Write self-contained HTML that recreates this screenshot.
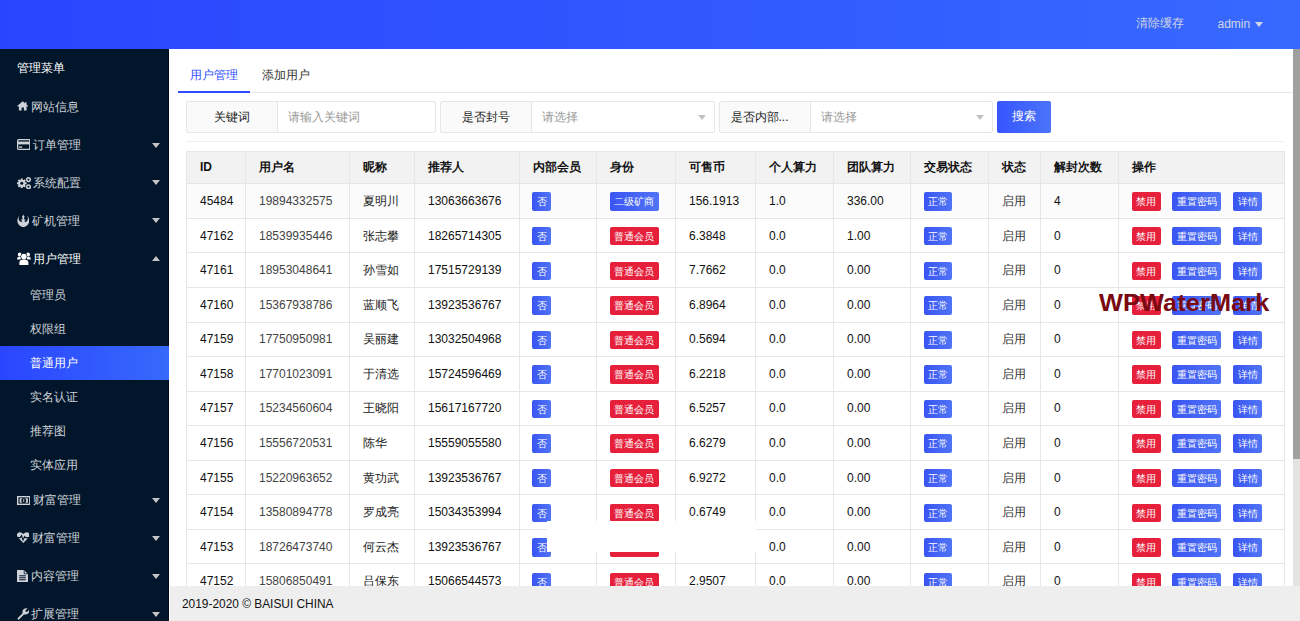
<!DOCTYPE html><html><head><meta charset="utf-8"><style>
*{margin:0;padding:0;box-sizing:border-box}
html,body{width:1300px;height:621px;overflow:hidden;background:#fff;font-family:"Liberation Sans",sans-serif;}
.a{position:absolute}
.t{position:absolute;white-space:nowrap}
#hdr{left:0;top:0;width:1300px;height:49px;background:linear-gradient(90deg,#2a45ff,#3769ff)}
#side{left:0;top:49px;width:169px;height:572px;background:#01162a;overflow:hidden}
#side .it{position:absolute;left:0;width:169px;color:#cfd2d8;font-size:12px;white-space:nowrap}
.arr{position:absolute;left:151.7px;width:0;height:0;border-left:4.8px solid transparent;border-right:4.8px solid transparent;border-top:5.2px solid #c2c4c8}
.arru{position:absolute;left:151.7px;width:0;height:0;border-left:4.8px solid transparent;border-right:4.8px solid transparent;border-bottom:5.2px solid #c2c4c8}
.hl{position:absolute;height:1px;background:#e6e6e6}
.vl{position:absolute;width:1px;background:#e6e6e6}
.cell{position:absolute;white-space:nowrap;font-size:12px;color:#222}
.bd{position:absolute;height:18.4px;line-height:19px;font-size:10px;font-weight:500;color:#fff;text-align:center;border-radius:2px;white-space:nowrap}
.bl{background:linear-gradient(90deg,#3a55f2,#5074f6)}
.rd{background:#e61f3b}
</style></head><body>
<div id="hdr" class="a"></div>
<div class="t" style="left:1136px;top:15px;font-size:12px;line-height:17px;color:#d2d6e6">清除缓存</div>
<div class="t" style="left:1217.5px;top:15.7px;font-size:12px;line-height:17px;color:#d2d6e6">admin</div>
<div class="a" style="left:1255px;top:22px;width:0;height:0;border-left:4.5px solid transparent;border-right:4.5px solid transparent;border-top:5px solid #d2d6e6"></div>
<div id="side" class="a">
<div class="it" style="left:17px;top:10px;line-height:18px;color:#fff">管理菜单</div>
<div class="a" style="left:16.8px;top:52.20px;line-height:0"><svg width="11.5" height="9.5" viewBox="0 0 11.5 9.5"><path d="M5.75 0.3 L0.2 4.9 L0.9 5.7 L1.9 4.9 V9.5 H4.6 V6.6 H6.9 V9.5 H9.6 V4.9 L10.6 5.7 L11.3 4.9 L9.5 3.4 V0.9 H8.3 V2.4 Z" fill="#cfd2d8"/></svg></div>
<div class="it" style="left:31px;width:120px;top:48.70px;height:18px;line-height:18px;color:#cfd2d8">网站信息</div>
<div class="a" style="left:16.8px;top:90.20px;line-height:0"><svg width="13.5" height="11" viewBox="0 0 13.5 11"><rect x="0.65" y="0.65" width="12.2" height="9.7" rx="1" fill="none" stroke="#cfd2d8" stroke-width="1.3"/><rect x="0.65" y="2.6" width="12.2" height="2.8" fill="#cfd2d8"/><rect x="2" y="7.4" width="3.2" height="1.3" fill="#cfd2d8"/></svg></div>
<div class="it" style="left:33px;width:120px;top:86.70px;height:18px;line-height:18px;color:#cfd2d8">订单管理</div>
<div class="arr" style="top:93.50px"></div>
<div class="a" style="left:16.8px;top:127.60px;line-height:0"><svg width="14" height="12.5" viewBox="0 0 14 12.5"><g fill="#cfd2d8"><circle cx="4.8" cy="6.3" r="3.6"/><g transform="translate(4.8 6.3)"><rect x="-1" y="-4.8" width="2" height="9.6"/><rect x="-1" y="-4.8" width="2" height="9.6" transform="rotate(45)"/><rect x="-1" y="-4.8" width="2" height="9.6" transform="rotate(90)"/><rect x="-1" y="-4.8" width="2" height="9.6" transform="rotate(135)"/></g></g><circle cx="4.8" cy="6.3" r="1.5" fill="#01162a"/><circle cx="11.5" cy="2.6" r="1.8" fill="none" stroke="#cfd2d8" stroke-width="1.5"/><circle cx="11.5" cy="9.8" r="1.8" fill="none" stroke="#cfd2d8" stroke-width="1.5"/></svg></div>
<div class="it" style="left:33px;width:120px;top:124.60px;height:18px;line-height:18px;color:#cfd2d8">系统配置</div>
<div class="arr" style="top:131.40px"></div>
<div class="a" style="left:16.8px;top:165.00px;line-height:0"><svg width="12.6" height="13.4" viewBox="0 0 12.6 13.4"><path d="M2.4 1.6 Q-1.6 6.5 2 11 Q6.3 15.2 10.6 11 Q14.2 6.5 10.2 1.6 Q12 5.5 9.5 7.5 Q8.4 8.3 7.3 7.6 Q8.6 6.6 8.2 5 L7.2 5.9 L7.1 3.6 Q7.8 2.8 7.5 2.1 Q7 2.6 6.3 0.3 Q5.6 2.6 5.1 2.1 Q4.8 2.8 5.5 3.6 L5.4 5.9 L4.4 5 Q4 6.6 5.3 7.6 Q4.2 8.3 3.1 7.5 Q0.6 5.5 2.4 1.6Z" fill="#cfd2d8"/></svg></div>
<div class="it" style="left:32px;width:120px;top:162.60px;height:18px;line-height:18px;color:#cfd2d8">矿机管理</div>
<div class="arr" style="top:169.40px"></div>
<div class="a" style="left:16.8px;top:203.00px;line-height:0"><svg width="13.8" height="13" viewBox="0 0 13.8 13"><g fill="#fff"><circle cx="2.7" cy="2.4" r="1.9"/><circle cx="11.1" cy="2.4" r="1.9"/><path d="M0 7.6 Q0 4.4 2.7 4.4 Q4 4.4 4.6 5.2 L3.4 7.6Z"/><path d="M13.8 7.6 Q13.8 4.4 11.1 4.4 Q9.8 4.4 9.2 5.2 L10.4 7.6Z"/></g><circle cx="6.9" cy="4.6" r="3.4" fill="#01162a"/><path d="M2.4 13 V10.4 Q2.4 7.4 6.9 7.4 Q11.4 7.4 11.4 10.4 V13Z" fill="#fff"/><circle cx="6.9" cy="4.6" r="2.8" fill="#fff"/></svg></div>
<div class="it" style="left:33px;width:120px;top:200.60px;height:18px;line-height:18px;color:#fff">用户管理</div>
<div class="arru" style="top:207.40px"></div>
<div class="a" style="left:168px;top:0;width:1px;height:572px;background:#000a1c"></div>
<div class="a" style="left:0;top:296.80px;width:169px;height:34.2px;background:linear-gradient(90deg,#2a45ff,#3769fb)"></div>
<div class="it" style="left:30px;width:120px;top:236.60px;line-height:18px;color:#cfd2d8">管理员</div>
<div class="it" style="left:30px;width:120px;top:271.00px;line-height:18px;color:#cfd2d8">权限组</div>
<div class="it" style="left:30px;width:120px;top:304.60px;line-height:18px;color:#fff">普通用户</div>
<div class="it" style="left:30px;width:120px;top:338.80px;line-height:18px;color:#cfd2d8">实名认证</div>
<div class="it" style="left:30px;width:120px;top:372.80px;line-height:18px;color:#cfd2d8">推荐图</div>
<div class="it" style="left:30px;width:120px;top:406.80px;line-height:18px;color:#cfd2d8">实体应用</div>
<div class="a" style="left:16.8px;top:446.80px;line-height:0"><svg width="13.5" height="9" viewBox="0 0 13.5 9"><rect x="0" y="0" width="13.5" height="9" fill="#cfd2d8"/><rect x="1.4" y="1.4" width="10.7" height="6.2" fill="#01162a"/><rect x="2.6" y="2.3" width="8.3" height="4.4" fill="#cfd2d8"/><ellipse cx="6.75" cy="4.5" rx="2.4" ry="2.6" fill="#01162a"/><rect x="6.3" y="3" width="0.9" height="3" fill="#cfd2d8"/></svg></div>
<div class="it" style="left:33px;width:120px;top:442.40px;height:18px;line-height:18px;color:#cfd2d8">财富管理</div>
<div class="arr" style="top:449.20px"></div>
<div class="a" style="left:16.8px;top:483.40px;line-height:0"><svg width="12.6" height="11" viewBox="0 0 12.6 11"><path d="M6.3 11 L1 5.6 Q-1 3 0.8 1 Q3.3 -1 6.3 2 Q9.3 -1 11.8 1 Q13.6 3 11.6 5.6 Z" fill="#cfd2d8"/><path d="M0.2 5.6 H3.3 L4.5 3.6 L6 8 L7.6 4.6 L8.4 5.6 H12.4" fill="none" stroke="#01162a" stroke-width="1.1"/></svg></div>
<div class="it" style="left:32px;width:120px;top:480.00px;height:18px;line-height:18px;color:#cfd2d8">财富管理</div>
<div class="arr" style="top:486.80px"></div>
<div class="a" style="left:16.8px;top:520.70px;line-height:0"><svg width="11" height="12.2" viewBox="0 0 11 12.2"><path d="M0 0 H7 L11 4 V12.2 H0Z" fill="#cfd2d8"/><path d="M7.2 0 V3.8 H11" fill="none" stroke="#01162a" stroke-width="0.8"/><rect x="2.2" y="5.3" width="6.6" height="1" fill="#01162a"/><rect x="2.2" y="7.3" width="6.6" height="1" fill="#01162a"/><rect x="2.2" y="9.3" width="6.6" height="1" fill="#01162a"/></svg></div>
<div class="it" style="left:31px;width:120px;top:518.20px;height:18px;line-height:18px;color:#cfd2d8">内容管理</div>
<div class="arr" style="top:525.00px"></div>
<div class="a" style="left:16.8px;top:559.30px;line-height:0"><svg width="12.2" height="12" viewBox="0 0 12.2 12"><path d="M1.3 11.8 Q0.2 11 0.8 10 L5.6 5.2 Q5 2.6 6.8 1 Q8.5 -0.3 10.6 0.4 L8.3 2.5 L8.8 3.7 L10 4.1 L12 1.9 Q12.6 4.1 11.1 5.6 Q9.4 7.1 7 6.4 L2.2 11.2 Q1.8 12 1.3 11.8Z" fill="#cfd2d8"/></svg></div>
<div class="it" style="left:31px;width:120px;top:556.00px;height:18px;line-height:18px;color:#cfd2d8">扩展管理</div>
<div class="arr" style="top:562.80px"></div>
</div>
<div class="t" style="left:190px;top:66px;font-size:12px;line-height:18px;color:#3050ff">用户管理</div>
<div class="t" style="left:262px;top:66px;font-size:12px;line-height:18px;color:#333">添加用户</div>
<div class="hl" style="left:178px;top:92px;width:1115px;background:#e6e6e6"></div>
<div class="a" style="left:178px;top:91px;width:72px;height:2px;background:#2e4cff"></div>
<div class="a" style="left:186px;top:101px;width:92px;height:32px;background:#fafafa;border:1px solid #e6e6e6;border-radius:2px 0 0 2px"></div>
<div class="a" style="left:277px;top:101px;width:159px;height:32px;background:#fff;border:1px solid #e6e6e6;border-radius:0 2px 2px 0"></div>
<div class="t" style="left:186px;width:92px;text-align:center;top:108px;font-size:12px;line-height:18px;color:#222">关键词</div>
<div class="t" style="left:288px;top:108px;font-size:12px;line-height:18px;color:#999">请输入关键词</div>
<div class="a" style="left:440px;top:101px;width:92px;height:32px;background:#fafafa;border:1px solid #e6e6e6;border-radius:2px 0 0 2px"></div>
<div class="a" style="left:531px;top:101px;width:183.5px;height:32px;background:#fff;border:1px solid #e6e6e6;border-radius:0 2px 2px 0"></div>
<div class="t" style="left:440px;width:92px;text-align:center;top:108px;font-size:12px;line-height:18px;color:#222">是否封号</div>
<div class="t" style="left:542px;top:108px;font-size:12px;line-height:18px;color:#999">请选择</div>
<div class="a" style="left:697.5px;top:114.5px;width:0;height:0;border-left:4.5px solid transparent;border-right:4.5px solid transparent;border-top:5px solid #c2c2c2"></div>
<div class="a" style="left:718.5px;top:101px;width:92px;height:32px;background:#fafafa;border:1px solid #e6e6e6;border-radius:2px 0 0 2px"></div>
<div class="a" style="left:809.5px;top:101px;width:183.0px;height:32px;background:#fff;border:1px solid #e6e6e6;border-radius:0 2px 2px 0"></div>
<div class="t" style="left:730.5px;top:108px;font-size:12px;line-height:18px;color:#222">是否内部...</div>
<div class="t" style="left:820.5px;top:108px;font-size:12px;line-height:18px;color:#999">请选择</div>
<div class="a" style="left:975.5px;top:114.5px;width:0;height:0;border-left:4.5px solid transparent;border-right:4.5px solid transparent;border-top:5px solid #c2c2c2"></div>
<div class="a" style="left:996.5px;top:101px;width:54px;height:32px;border-radius:2px;background:linear-gradient(90deg,#3755ff,#4b74f9)"></div>
<div class="t" style="left:996.5px;width:54px;text-align:center;top:107.3px;font-size:12px;line-height:18px;color:#fff">搜索</div>
<div class="hl" style="left:186px;top:141px;width:1098px;background:#eeeeee"></div>
<div class="a" style="left:186px;top:151px;width:1099px;height:32px;background:#f2f2f2"></div>
<div class="a" style="left:186px;top:183px;width:1099px;height:34.545px;background:#fbfbfb"></div>
<div class="hl" style="left:186px;top:151px;width:1099px"></div>
<div class="hl" style="left:186px;top:183.400px;width:1099px"></div>
<div class="hl" style="left:186px;top:217.945px;width:1099px"></div>
<div class="hl" style="left:186px;top:252.490px;width:1099px"></div>
<div class="hl" style="left:186px;top:287.035px;width:1099px"></div>
<div class="hl" style="left:186px;top:321.580px;width:1099px"></div>
<div class="hl" style="left:186px;top:356.125px;width:1099px"></div>
<div class="hl" style="left:186px;top:390.670px;width:1099px"></div>
<div class="hl" style="left:186px;top:425.215px;width:1099px"></div>
<div class="hl" style="left:186px;top:459.760px;width:1099px"></div>
<div class="hl" style="left:186px;top:494.305px;width:1099px"></div>
<div class="hl" style="left:186px;top:528.850px;width:1099px"></div>
<div class="hl" style="left:186px;top:563.395px;width:1099px"></div>
<div class="hl" style="left:186px;top:597.940px;width:1099px"></div>
<div class="vl" style="left:186px;top:151px;height:435px"></div>
<div class="vl" style="left:245px;top:151px;height:435px"></div>
<div class="vl" style="left:349px;top:151px;height:435px"></div>
<div class="vl" style="left:414px;top:151px;height:435px"></div>
<div class="vl" style="left:519px;top:151px;height:435px"></div>
<div class="vl" style="left:596px;top:151px;height:435px"></div>
<div class="vl" style="left:675px;top:151px;height:435px"></div>
<div class="vl" style="left:755px;top:151px;height:435px"></div>
<div class="vl" style="left:833px;top:151px;height:435px"></div>
<div class="vl" style="left:910px;top:151px;height:435px"></div>
<div class="vl" style="left:988px;top:151px;height:435px"></div>
<div class="vl" style="left:1040px;top:151px;height:435px"></div>
<div class="vl" style="left:1118px;top:151px;height:435px"></div>
<div class="vl" style="left:1284px;top:151px;height:435px"></div>
<div class="cell" style="left:200px;top:151px;height:32px;line-height:32px;font-weight:bold;font-size:12px;color:#111">ID</div>
<div class="cell" style="left:259px;top:151px;height:32px;line-height:32px;font-weight:bold;font-size:12px;color:#111">用户名</div>
<div class="cell" style="left:363px;top:151px;height:32px;line-height:32px;font-weight:bold;font-size:12px;color:#111">昵称</div>
<div class="cell" style="left:428px;top:151px;height:32px;line-height:32px;font-weight:bold;font-size:12px;color:#111">推荐人</div>
<div class="cell" style="left:533px;top:151px;height:32px;line-height:32px;font-weight:bold;font-size:12px;color:#111">内部会员</div>
<div class="cell" style="left:610px;top:151px;height:32px;line-height:32px;font-weight:bold;font-size:12px;color:#111">身份</div>
<div class="cell" style="left:689px;top:151px;height:32px;line-height:32px;font-weight:bold;font-size:12px;color:#111">可售币</div>
<div class="cell" style="left:769px;top:151px;height:32px;line-height:32px;font-weight:bold;font-size:12px;color:#111">个人算力</div>
<div class="cell" style="left:847px;top:151px;height:32px;line-height:32px;font-weight:bold;font-size:12px;color:#111">团队算力</div>
<div class="cell" style="left:924px;top:151px;height:32px;line-height:32px;font-weight:bold;font-size:12px;color:#111">交易状态</div>
<div class="cell" style="left:1002px;top:151px;height:32px;line-height:32px;font-weight:bold;font-size:12px;color:#111">状态</div>
<div class="cell" style="left:1054px;top:151px;height:32px;line-height:32px;font-weight:bold;font-size:12px;color:#111">解封次数</div>
<div class="cell" style="left:1132px;top:151px;height:32px;line-height:32px;font-weight:bold;font-size:12px;color:#111">操作</div>
<div class="cell" style="left:200px;top:184.00px;height:34.545px;line-height:34.545px;color:#111;font-size:12px;">45484</div>
<div class="cell" style="left:259px;top:184.00px;height:34.545px;line-height:34.545px;color:#444;font-size:12px;">19894332575</div>
<div class="cell" style="left:363px;top:184.00px;height:34.545px;line-height:34.545px;color:#222;font-size:12px;">夏明川</div>
<div class="cell" style="left:428px;top:184.00px;height:34.545px;line-height:34.545px;color:#111;font-size:12px;">13063663676</div>
<div class="bd bl" style="left:532px;top:192.37px;width:19px">否</div>
<div class="bd bl" style="left:609.5px;top:192.37px;width:49px">二级矿商</div>
<div class="cell" style="left:689px;top:184.00px;height:34.545px;line-height:34.545px;color:#111;font-size:12px;">156.1913</div>
<div class="cell" style="left:769px;top:184.00px;height:34.545px;line-height:34.545px;color:#111;font-size:12px;">1.0</div>
<div class="cell" style="left:847px;top:184.00px;height:34.545px;line-height:34.545px;color:#111;font-size:12px;">336.00</div>
<div class="bd bl" style="left:923.5px;top:192.37px;width:28.5px">正常</div>
<div class="cell" style="left:1002px;top:184.00px;height:34.545px;line-height:34.545px;color:#333;font-size:12px;">启用</div>
<div class="cell" style="left:1054px;top:184.00px;height:34.545px;line-height:34.545px;color:#111;font-size:12px;">4</div>
<div class="bd rd" style="left:1132px;top:192.37px;width:28.5px">禁用</div>
<div class="bd bl" style="left:1172px;top:192.37px;width:49px">重置密码</div>
<div class="bd bl" style="left:1233px;top:192.37px;width:29px">详情</div>
<div class="cell" style="left:200px;top:218.58px;height:34.545px;line-height:34.545px;color:#111;font-size:12px;">47162</div>
<div class="cell" style="left:259px;top:218.58px;height:34.545px;line-height:34.545px;color:#444;font-size:12px;">18539935446</div>
<div class="cell" style="left:363px;top:218.58px;height:34.545px;line-height:34.545px;color:#222;font-size:12px;">张志攀</div>
<div class="cell" style="left:428px;top:218.58px;height:34.545px;line-height:34.545px;color:#111;font-size:12px;">18265714305</div>
<div class="bd bl" style="left:532px;top:226.95px;width:19px">否</div>
<div class="bd rd" style="left:609.5px;top:226.95px;width:49px">普通会员</div>
<div class="cell" style="left:689px;top:218.58px;height:34.545px;line-height:34.545px;color:#111;font-size:12px;">6.3848</div>
<div class="cell" style="left:769px;top:218.58px;height:34.545px;line-height:34.545px;color:#111;font-size:12px;">0.0</div>
<div class="cell" style="left:847px;top:218.58px;height:34.545px;line-height:34.545px;color:#111;font-size:12px;">1.00</div>
<div class="bd bl" style="left:923.5px;top:226.95px;width:28.5px">正常</div>
<div class="cell" style="left:1002px;top:218.58px;height:34.545px;line-height:34.545px;color:#333;font-size:12px;">启用</div>
<div class="cell" style="left:1054px;top:218.58px;height:34.545px;line-height:34.545px;color:#111;font-size:12px;">0</div>
<div class="bd rd" style="left:1132px;top:226.95px;width:28.5px">禁用</div>
<div class="bd bl" style="left:1172px;top:226.95px;width:49px">重置密码</div>
<div class="bd bl" style="left:1233px;top:226.95px;width:29px">详情</div>
<div class="cell" style="left:200px;top:253.16px;height:34.545px;line-height:34.545px;color:#111;font-size:12px;">47161</div>
<div class="cell" style="left:259px;top:253.16px;height:34.545px;line-height:34.545px;color:#444;font-size:12px;">18953048641</div>
<div class="cell" style="left:363px;top:253.16px;height:34.545px;line-height:34.545px;color:#222;font-size:12px;">孙雪如</div>
<div class="cell" style="left:428px;top:253.16px;height:34.545px;line-height:34.545px;color:#111;font-size:12px;">17515729139</div>
<div class="bd bl" style="left:532px;top:261.53px;width:19px">否</div>
<div class="bd rd" style="left:609.5px;top:261.53px;width:49px">普通会员</div>
<div class="cell" style="left:689px;top:253.16px;height:34.545px;line-height:34.545px;color:#111;font-size:12px;">7.7662</div>
<div class="cell" style="left:769px;top:253.16px;height:34.545px;line-height:34.545px;color:#111;font-size:12px;">0.0</div>
<div class="cell" style="left:847px;top:253.16px;height:34.545px;line-height:34.545px;color:#111;font-size:12px;">0.00</div>
<div class="bd bl" style="left:923.5px;top:261.53px;width:28.5px">正常</div>
<div class="cell" style="left:1002px;top:253.16px;height:34.545px;line-height:34.545px;color:#333;font-size:12px;">启用</div>
<div class="cell" style="left:1054px;top:253.16px;height:34.545px;line-height:34.545px;color:#111;font-size:12px;">0</div>
<div class="bd rd" style="left:1132px;top:261.53px;width:28.5px">禁用</div>
<div class="bd bl" style="left:1172px;top:261.53px;width:49px">重置密码</div>
<div class="bd bl" style="left:1233px;top:261.53px;width:29px">详情</div>
<div class="cell" style="left:200px;top:287.74px;height:34.545px;line-height:34.545px;color:#111;font-size:12px;">47160</div>
<div class="cell" style="left:259px;top:287.74px;height:34.545px;line-height:34.545px;color:#444;font-size:12px;">15367938786</div>
<div class="cell" style="left:363px;top:287.74px;height:34.545px;line-height:34.545px;color:#222;font-size:12px;">蓝顺飞</div>
<div class="cell" style="left:428px;top:287.74px;height:34.545px;line-height:34.545px;color:#111;font-size:12px;">13923536767</div>
<div class="bd bl" style="left:532px;top:296.11px;width:19px">否</div>
<div class="bd rd" style="left:609.5px;top:296.11px;width:49px">普通会员</div>
<div class="cell" style="left:689px;top:287.74px;height:34.545px;line-height:34.545px;color:#111;font-size:12px;">6.8964</div>
<div class="cell" style="left:769px;top:287.74px;height:34.545px;line-height:34.545px;color:#111;font-size:12px;">0.0</div>
<div class="cell" style="left:847px;top:287.74px;height:34.545px;line-height:34.545px;color:#111;font-size:12px;">0.00</div>
<div class="bd bl" style="left:923.5px;top:296.11px;width:28.5px">正常</div>
<div class="cell" style="left:1002px;top:287.74px;height:34.545px;line-height:34.545px;color:#333;font-size:12px;">启用</div>
<div class="cell" style="left:1054px;top:287.74px;height:34.545px;line-height:34.545px;color:#111;font-size:12px;">0</div>
<div class="bd rd" style="left:1132px;top:296.11px;width:28.5px">禁用</div>
<div class="bd bl" style="left:1172px;top:296.11px;width:49px">重置密码</div>
<div class="bd bl" style="left:1233px;top:296.11px;width:29px">详情</div>
<div class="cell" style="left:200px;top:322.32px;height:34.545px;line-height:34.545px;color:#111;font-size:12px;">47159</div>
<div class="cell" style="left:259px;top:322.32px;height:34.545px;line-height:34.545px;color:#444;font-size:12px;">17750950981</div>
<div class="cell" style="left:363px;top:322.32px;height:34.545px;line-height:34.545px;color:#222;font-size:12px;">吴丽建</div>
<div class="cell" style="left:428px;top:322.32px;height:34.545px;line-height:34.545px;color:#111;font-size:12px;">13032504968</div>
<div class="bd bl" style="left:532px;top:330.69px;width:19px">否</div>
<div class="bd rd" style="left:609.5px;top:330.69px;width:49px">普通会员</div>
<div class="cell" style="left:689px;top:322.32px;height:34.545px;line-height:34.545px;color:#111;font-size:12px;">0.5694</div>
<div class="cell" style="left:769px;top:322.32px;height:34.545px;line-height:34.545px;color:#111;font-size:12px;">0.0</div>
<div class="cell" style="left:847px;top:322.32px;height:34.545px;line-height:34.545px;color:#111;font-size:12px;">0.00</div>
<div class="bd bl" style="left:923.5px;top:330.69px;width:28.5px">正常</div>
<div class="cell" style="left:1002px;top:322.32px;height:34.545px;line-height:34.545px;color:#333;font-size:12px;">启用</div>
<div class="cell" style="left:1054px;top:322.32px;height:34.545px;line-height:34.545px;color:#111;font-size:12px;">0</div>
<div class="bd rd" style="left:1132px;top:330.69px;width:28.5px">禁用</div>
<div class="bd bl" style="left:1172px;top:330.69px;width:49px">重置密码</div>
<div class="bd bl" style="left:1233px;top:330.69px;width:29px">详情</div>
<div class="cell" style="left:200px;top:356.90px;height:34.545px;line-height:34.545px;color:#111;font-size:12px;">47158</div>
<div class="cell" style="left:259px;top:356.90px;height:34.545px;line-height:34.545px;color:#444;font-size:12px;">17701023091</div>
<div class="cell" style="left:363px;top:356.90px;height:34.545px;line-height:34.545px;color:#222;font-size:12px;">于清选</div>
<div class="cell" style="left:428px;top:356.90px;height:34.545px;line-height:34.545px;color:#111;font-size:12px;">15724596469</div>
<div class="bd bl" style="left:532px;top:365.27px;width:19px">否</div>
<div class="bd rd" style="left:609.5px;top:365.27px;width:49px">普通会员</div>
<div class="cell" style="left:689px;top:356.90px;height:34.545px;line-height:34.545px;color:#111;font-size:12px;">6.2218</div>
<div class="cell" style="left:769px;top:356.90px;height:34.545px;line-height:34.545px;color:#111;font-size:12px;">0.0</div>
<div class="cell" style="left:847px;top:356.90px;height:34.545px;line-height:34.545px;color:#111;font-size:12px;">0.00</div>
<div class="bd bl" style="left:923.5px;top:365.27px;width:28.5px">正常</div>
<div class="cell" style="left:1002px;top:356.90px;height:34.545px;line-height:34.545px;color:#333;font-size:12px;">启用</div>
<div class="cell" style="left:1054px;top:356.90px;height:34.545px;line-height:34.545px;color:#111;font-size:12px;">0</div>
<div class="bd rd" style="left:1132px;top:365.27px;width:28.5px">禁用</div>
<div class="bd bl" style="left:1172px;top:365.27px;width:49px">重置密码</div>
<div class="bd bl" style="left:1233px;top:365.27px;width:29px">详情</div>
<div class="cell" style="left:200px;top:391.48px;height:34.545px;line-height:34.545px;color:#111;font-size:12px;">47157</div>
<div class="cell" style="left:259px;top:391.48px;height:34.545px;line-height:34.545px;color:#444;font-size:12px;">15234560604</div>
<div class="cell" style="left:363px;top:391.48px;height:34.545px;line-height:34.545px;color:#222;font-size:12px;">王晓阳</div>
<div class="cell" style="left:428px;top:391.48px;height:34.545px;line-height:34.545px;color:#111;font-size:12px;">15617167720</div>
<div class="bd bl" style="left:532px;top:399.85px;width:19px">否</div>
<div class="bd rd" style="left:609.5px;top:399.85px;width:49px">普通会员</div>
<div class="cell" style="left:689px;top:391.48px;height:34.545px;line-height:34.545px;color:#111;font-size:12px;">6.5257</div>
<div class="cell" style="left:769px;top:391.48px;height:34.545px;line-height:34.545px;color:#111;font-size:12px;">0.0</div>
<div class="cell" style="left:847px;top:391.48px;height:34.545px;line-height:34.545px;color:#111;font-size:12px;">0.00</div>
<div class="bd bl" style="left:923.5px;top:399.85px;width:28.5px">正常</div>
<div class="cell" style="left:1002px;top:391.48px;height:34.545px;line-height:34.545px;color:#333;font-size:12px;">启用</div>
<div class="cell" style="left:1054px;top:391.48px;height:34.545px;line-height:34.545px;color:#111;font-size:12px;">0</div>
<div class="bd rd" style="left:1132px;top:399.85px;width:28.5px">禁用</div>
<div class="bd bl" style="left:1172px;top:399.85px;width:49px">重置密码</div>
<div class="bd bl" style="left:1233px;top:399.85px;width:29px">详情</div>
<div class="cell" style="left:200px;top:426.06px;height:34.545px;line-height:34.545px;color:#111;font-size:12px;">47156</div>
<div class="cell" style="left:259px;top:426.06px;height:34.545px;line-height:34.545px;color:#444;font-size:12px;">15556720531</div>
<div class="cell" style="left:363px;top:426.06px;height:34.545px;line-height:34.545px;color:#222;font-size:12px;">陈华</div>
<div class="cell" style="left:428px;top:426.06px;height:34.545px;line-height:34.545px;color:#111;font-size:12px;">15559055580</div>
<div class="bd bl" style="left:532px;top:434.43px;width:19px">否</div>
<div class="bd rd" style="left:609.5px;top:434.43px;width:49px">普通会员</div>
<div class="cell" style="left:689px;top:426.06px;height:34.545px;line-height:34.545px;color:#111;font-size:12px;">6.6279</div>
<div class="cell" style="left:769px;top:426.06px;height:34.545px;line-height:34.545px;color:#111;font-size:12px;">0.0</div>
<div class="cell" style="left:847px;top:426.06px;height:34.545px;line-height:34.545px;color:#111;font-size:12px;">0.00</div>
<div class="bd bl" style="left:923.5px;top:434.43px;width:28.5px">正常</div>
<div class="cell" style="left:1002px;top:426.06px;height:34.545px;line-height:34.545px;color:#333;font-size:12px;">启用</div>
<div class="cell" style="left:1054px;top:426.06px;height:34.545px;line-height:34.545px;color:#111;font-size:12px;">0</div>
<div class="bd rd" style="left:1132px;top:434.43px;width:28.5px">禁用</div>
<div class="bd bl" style="left:1172px;top:434.43px;width:49px">重置密码</div>
<div class="bd bl" style="left:1233px;top:434.43px;width:29px">详情</div>
<div class="cell" style="left:200px;top:460.64px;height:34.545px;line-height:34.545px;color:#111;font-size:12px;">47155</div>
<div class="cell" style="left:259px;top:460.64px;height:34.545px;line-height:34.545px;color:#444;font-size:12px;">15220963652</div>
<div class="cell" style="left:363px;top:460.64px;height:34.545px;line-height:34.545px;color:#222;font-size:12px;">黄功武</div>
<div class="cell" style="left:428px;top:460.64px;height:34.545px;line-height:34.545px;color:#111;font-size:12px;">13923536767</div>
<div class="bd bl" style="left:532px;top:469.01px;width:19px">否</div>
<div class="bd rd" style="left:609.5px;top:469.01px;width:49px">普通会员</div>
<div class="cell" style="left:689px;top:460.64px;height:34.545px;line-height:34.545px;color:#111;font-size:12px;">6.9272</div>
<div class="cell" style="left:769px;top:460.64px;height:34.545px;line-height:34.545px;color:#111;font-size:12px;">0.0</div>
<div class="cell" style="left:847px;top:460.64px;height:34.545px;line-height:34.545px;color:#111;font-size:12px;">0.00</div>
<div class="bd bl" style="left:923.5px;top:469.01px;width:28.5px">正常</div>
<div class="cell" style="left:1002px;top:460.64px;height:34.545px;line-height:34.545px;color:#333;font-size:12px;">启用</div>
<div class="cell" style="left:1054px;top:460.64px;height:34.545px;line-height:34.545px;color:#111;font-size:12px;">0</div>
<div class="bd rd" style="left:1132px;top:469.01px;width:28.5px">禁用</div>
<div class="bd bl" style="left:1172px;top:469.01px;width:49px">重置密码</div>
<div class="bd bl" style="left:1233px;top:469.01px;width:29px">详情</div>
<div class="cell" style="left:200px;top:495.22px;height:34.545px;line-height:34.545px;color:#111;font-size:12px;">47154</div>
<div class="cell" style="left:259px;top:495.22px;height:34.545px;line-height:34.545px;color:#444;font-size:12px;">13580894778</div>
<div class="cell" style="left:363px;top:495.22px;height:34.545px;line-height:34.545px;color:#222;font-size:12px;">罗成亮</div>
<div class="cell" style="left:428px;top:495.22px;height:34.545px;line-height:34.545px;color:#111;font-size:12px;">15034353994</div>
<div class="bd bl" style="left:532px;top:503.59px;width:19px">否</div>
<div class="bd rd" style="left:609.5px;top:503.59px;width:49px">普通会员</div>
<div class="cell" style="left:689px;top:495.22px;height:34.545px;line-height:34.545px;color:#111;font-size:12px;">0.6749</div>
<div class="cell" style="left:769px;top:495.22px;height:34.545px;line-height:34.545px;color:#111;font-size:12px;">0.0</div>
<div class="cell" style="left:847px;top:495.22px;height:34.545px;line-height:34.545px;color:#111;font-size:12px;">0.00</div>
<div class="bd bl" style="left:923.5px;top:503.59px;width:28.5px">正常</div>
<div class="cell" style="left:1002px;top:495.22px;height:34.545px;line-height:34.545px;color:#333;font-size:12px;">启用</div>
<div class="cell" style="left:1054px;top:495.22px;height:34.545px;line-height:34.545px;color:#111;font-size:12px;">0</div>
<div class="bd rd" style="left:1132px;top:503.59px;width:28.5px">禁用</div>
<div class="bd bl" style="left:1172px;top:503.59px;width:49px">重置密码</div>
<div class="bd bl" style="left:1233px;top:503.59px;width:29px">详情</div>
<div class="cell" style="left:200px;top:529.80px;height:34.545px;line-height:34.545px;color:#111;font-size:12px;">47153</div>
<div class="cell" style="left:259px;top:529.80px;height:34.545px;line-height:34.545px;color:#444;font-size:12px;">18726473740</div>
<div class="cell" style="left:363px;top:529.80px;height:34.545px;line-height:34.545px;color:#222;font-size:12px;">何云杰</div>
<div class="cell" style="left:428px;top:529.80px;height:34.545px;line-height:34.545px;color:#111;font-size:12px;">13923536767</div>
<div class="bd bl" style="left:532px;top:538.17px;width:19px">否</div>
<div class="bd rd" style="left:609.5px;top:538.17px;width:49px"></div>
<div class="cell" style="left:689px;top:529.80px;height:34.545px;line-height:34.545px;color:#111;font-size:12px;">0.6749</div>
<div class="cell" style="left:769px;top:529.80px;height:34.545px;line-height:34.545px;color:#111;font-size:12px;">0.0</div>
<div class="cell" style="left:847px;top:529.80px;height:34.545px;line-height:34.545px;color:#111;font-size:12px;">0.00</div>
<div class="bd bl" style="left:923.5px;top:538.17px;width:28.5px">正常</div>
<div class="cell" style="left:1002px;top:529.80px;height:34.545px;line-height:34.545px;color:#333;font-size:12px;">启用</div>
<div class="cell" style="left:1054px;top:529.80px;height:34.545px;line-height:34.545px;color:#111;font-size:12px;">0</div>
<div class="bd rd" style="left:1132px;top:538.17px;width:28.5px">禁用</div>
<div class="bd bl" style="left:1172px;top:538.17px;width:49px">重置密码</div>
<div class="bd bl" style="left:1233px;top:538.17px;width:29px">详情</div>
<div class="cell" style="left:200px;top:564.38px;height:34.545px;line-height:34.545px;color:#111;font-size:12px;">47152</div>
<div class="cell" style="left:259px;top:564.38px;height:34.545px;line-height:34.545px;color:#444;font-size:12px;">15806850491</div>
<div class="cell" style="left:363px;top:564.38px;height:34.545px;line-height:34.545px;color:#222;font-size:12px;">吕保东</div>
<div class="cell" style="left:428px;top:564.38px;height:34.545px;line-height:34.545px;color:#111;font-size:12px;">15066544573</div>
<div class="bd bl" style="left:532px;top:572.75px;width:19px">否</div>
<div class="bd rd" style="left:609.5px;top:572.75px;width:49px">普通会员</div>
<div class="cell" style="left:689px;top:564.38px;height:34.545px;line-height:34.545px;color:#111;font-size:12px;">2.9507</div>
<div class="cell" style="left:769px;top:564.38px;height:34.545px;line-height:34.545px;color:#111;font-size:12px;">0.0</div>
<div class="cell" style="left:847px;top:564.38px;height:34.545px;line-height:34.545px;color:#111;font-size:12px;">0.00</div>
<div class="bd bl" style="left:923.5px;top:572.75px;width:28.5px">正常</div>
<div class="cell" style="left:1002px;top:564.38px;height:34.545px;line-height:34.545px;color:#333;font-size:12px;">启用</div>
<div class="cell" style="left:1054px;top:564.38px;height:34.545px;line-height:34.545px;color:#111;font-size:12px;">0</div>
<div class="bd rd" style="left:1132px;top:572.75px;width:28.5px">禁用</div>
<div class="bd bl" style="left:1172px;top:572.75px;width:49px">重置密码</div>
<div class="bd bl" style="left:1233px;top:572.75px;width:29px">详情</div>
<div class="a" style="left:547px;top:521px;width:209px;height:31px;background:#fff"></div>
<div class="t" style="left:1099px;top:291px;font-size:23px;line-height:24px;font-weight:bold;color:#790a12;letter-spacing:0.1px;transform:scaleX(1.1);transform-origin:0 0">WPWaterMark</div>
<div class="a" style="left:1293px;top:49px;width:7px;height:537px;background:#e3e3e3"></div>
<div class="a" style="left:1293px;top:49px;width:7px;height:409.6px;background:#a0a0a0"></div>
<div class="a" style="left:170px;top:586px;width:1130px;height:35px;background:#eeeeee"></div>
<div class="t" style="left:182px;top:596px;font-size:11.9px;line-height:17px;color:#111">2019-2020 © BAISUI CHINA</div>
</body></html>
